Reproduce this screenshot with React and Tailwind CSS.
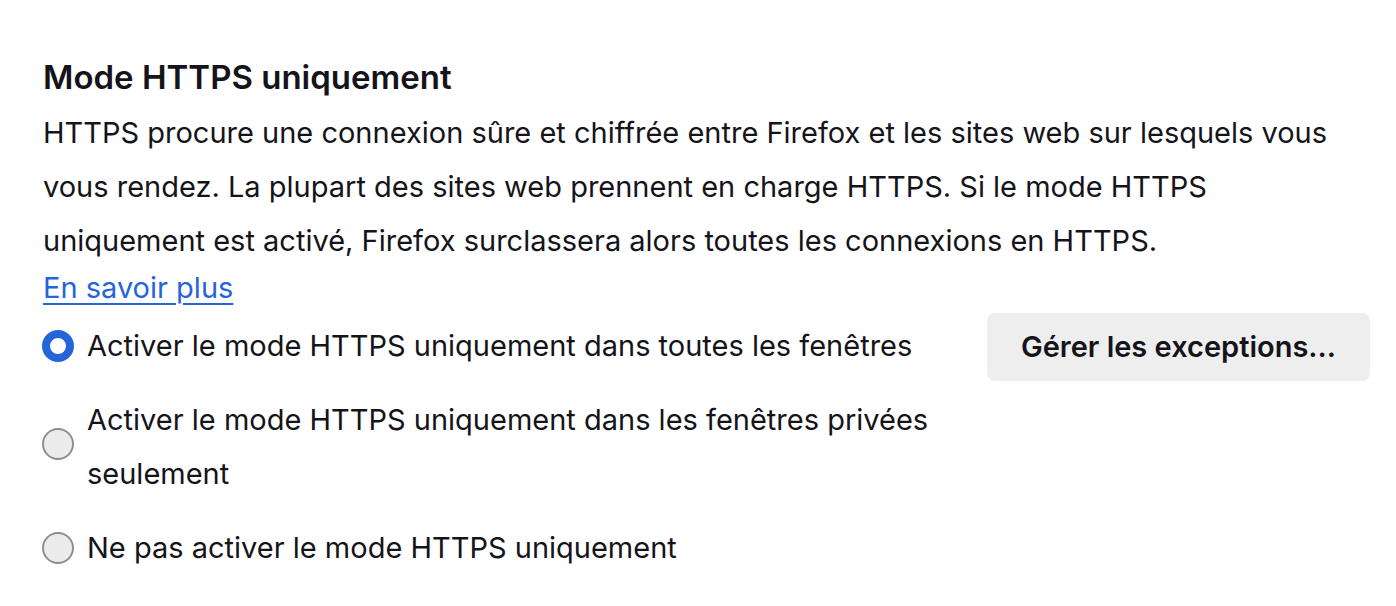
export default function App() {
  const font = { fontFamily: 'Inter, "Noto Sans", sans-serif' };
  return (
    <div className="w-[1396px] h-[606px] bg-white text-[#15141a] overflow-hidden" style={font}>
      <div className="pl-[43px] pr-[26px] pt-[57px]">
        <h1 className="text-[33px] leading-[40px] font-semibold">Mode HTTPS uniquement</h1>
        <p className="mt-[9px] text-[29px] leading-[54px] w-[1300px]">
          HTTPS procure une connexion sûre et chiffrée entre Firefox et les sites web sur lesquels vous vous rendez. La plupart des sites web prennent en charge HTTPS. Si le mode HTTPS uniquement est activé, Firefox surclassera alors toutes les connexions en HTTPS.
        </p>
        <a href="#" className="block mt-[2px] text-[29px] leading-[36px] text-[#2664dc] underline underline-offset-[5px] decoration-2 w-fit">
          En savoir plus
        </a>
        <div className="mt-[7px] flex items-center justify-between">
          <label className="flex items-center gap-[13px] text-[29px] leading-[54px] -mt-[3px]">
            <span className="w-[32px] h-[32px] rounded-full border-[8px] border-[#2664dc] bg-white shrink-0 ml-[-1px]" />
            <span>Activer le mode HTTPS uniquement dans toutes les fenêtres</span>
          </label>
          <button className="h-[68px] w-[383px] rounded-[8px] bg-[#eeeeee] text-[29px] font-semibold">
            Gérer les exceptions...
          </button>
        </div>
        <label className="mt-[12px] flex items-start gap-[13px] text-[29px] leading-[54px]">
          <span className="mt-[35px] w-[32px] h-[32px] rounded-full border-2 border-[#8f8f8f] bg-[#ececec] shrink-0 ml-[-1px]" />
          <span className="w-[880px]">Activer le mode HTTPS uniquement dans les fenêtres privées seulement</span>
        </label>
        <label className="mt-[20px] flex items-center gap-[13px] text-[29px] leading-[54px]">
          <span className="w-[32px] h-[32px] rounded-full border-2 border-[#8f8f8f] bg-[#ececec] shrink-0 ml-[-1px]" />
          <span>Ne pas activer le mode HTTPS uniquement</span>
        </label>
      </div>
    </div>
  );
}
